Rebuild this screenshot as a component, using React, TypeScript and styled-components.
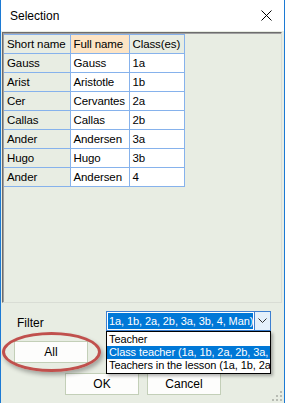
import styled, { createGlobalStyle } from 'styled-components';

const GlobalStyle = createGlobalStyle`
  html, body {
    margin: 0;
    padding: 0;
    background: #ffffff;
  }
  * {
    box-sizing: border-box;
  }
`;

const Window = styled.div`
  position: relative;
  width: 285px;
  height: 403px;
  display: flex;
  flex-direction: column;
  border-left: 1px solid #1c7ad4;
  border-right: 1px solid #1c7ad4;
  font-family: 'Liberation Sans', Arial, sans-serif;
  font-size: 12px;
  color: #000;
  overflow: hidden;
`;

const TitleBar = styled.div`
  height: 31px;
  flex-shrink: 0;
  display: flex;
  align-items: center;
  justify-content: space-between;
  padding: 0 10px 0 9px;
  background: #ffffff;
  font-size: 12px;
`;

const CloseButton = styled.button`
  width: 16px;
  height: 16px;
  padding: 0;
  border: none;
  background: transparent;
  display: flex;
  align-items: center;
  justify-content: center;
`;

const Body = styled.div`
  position: relative;
  flex: 1;
  display: flex;
  flex-direction: column;
  background: #e8ede3;
`;

const GridPanel = styled.div`
  margin: 1px 2px 0 1px;
  height: 271px;
  border-top: 1px solid #6d6d6d;
  border-left: 1px solid #6d6d6d;
  border-right: 1px solid #d9ddd5;
  border-bottom: 1px solid #d9ddd5;
  box-shadow: inset 1px 1px 0 #a0a0a0;
  padding: 1px 0 0 1px;
`;

const Table = styled.table`
  border-collapse: collapse;
  font-size: 11.5px;
  letter-spacing: -0.1px;
`;

const Cell = styled.td<{ $head?: boolean; $hot?: boolean; $w: number }>`
  width: ${(p) => p.$w}px;
  max-width: ${(p) => p.$w}px;
  height: 19px;
  padding: 0 0 0 3px;
  border: 1px solid #86b2ec;
  white-space: nowrap;
  overflow: hidden;
  background: ${(p) => (p.$hot ? '#fde4c4' : p.$head ? '#e8ede3' : '#ffffff')};
  &:first-child {
    background: ${(p) => (p.$hot ? '#fde4c4' : '#e8ede3')};
    border-left: none;
  }
`;

const FilterRow = styled.div`
  display: flex;
  align-items: center;
  padding: 8px 0 0 16px;
  height: 28px;
`;

const FilterLabel = styled.span`
  width: 89px;
  padding-top: 4px;
`;

const Combo = styled.div`
  width: 165px;
  height: 20px;
  display: flex;
  border: 1px solid #3d7fd0;
  background: #ffffff;
`;

const ComboValue = styled.div`
  flex: 1;
  margin: 1px;
  padding-left: 1px;
  background: #0078d7;
  color: #ffffff;
  font-size: 11px;
  line-height: 16px;
  letter-spacing: -0.1px;
  white-space: nowrap;
  overflow: hidden;
`;

const ComboArrow = styled.div`
  width: 16px;
  display: flex;
  align-items: center;
  justify-content: center;
  border-left: 1px solid #3d7fd0;
  background: #e5f1fb;
`;

const DropList = styled.ul`
  position: absolute;
  left: 105px;
  top: 300px;
  width: 165px;
  margin: 0;
  padding: 1px 0;
  list-style: none;
  border: 1px solid #000000;
  background: #ffffff;
  box-shadow: 2px 2px 3px rgba(0, 0, 0, 0.3);
  z-index: 3;
`;

const DropItem = styled.li<{ $active?: boolean }>`
  height: 13px;
  line-height: 13px;
  padding-left: 2px;
  font-size: 11px;
  letter-spacing: -0.1px;
  white-space: nowrap;
  overflow: hidden;
  background: ${(p) => (p.$active ? '#0078d7' : 'transparent')};
  color: ${(p) => (p.$active ? '#ffffff' : '#000000')};
`;

const AllRow = styled.div`
  padding: 10px 0 0 13px;
`;

const Button = styled.button<{ $w: number }>`
  width: ${(p) => p.$w}px;
  height: 22px;
  padding: 0;
  border: 1px solid #c3cfb8;
  background: #fdfdfc;
  font-family: 'Liberation Sans', Arial, sans-serif;
  font-size: 12px;
  color: #000;
`;

const ButtonRow = styled.div`
  display: flex;
  gap: 8px;
  padding: 10px 0 0 64px;
`;

const Highlight = styled.div`
  position: absolute;
  left: 1px;
  top: 301px;
  width: 99px;
  height: 40px;
  border: 3px solid #c0504d;
  border-radius: 50%;
  box-shadow: 2px 3px 4px rgba(0, 0, 0, 0.3);
  pointer-events: none;
  z-index: 2;
`;

const Grip = styled.svg`
  position: absolute;
  right: 2px;
  bottom: 2px;
`;

const rows = [
  ['Gauss', 'Gauss', '1a'],
  ['Arist', 'Aristotle', '1b'],
  ['Cer', 'Cervantes', '2a'],
  ['Callas', 'Callas', '2b'],
  ['Ander', 'Andersen', '3a'],
  ['Hugo', 'Hugo', '3b'],
  ['Ander', 'Andersen', '4'],
];

const widths = [66, 59, 55];

export default function App() {
  return (
    <>
      <GlobalStyle />
      <Window>
        <TitleBar>
          <span>Selection</span>
          <CloseButton aria-label="Close">
            <svg width="11" height="11" viewBox="0 0 11 11">
              <path d="M0.5 0.5 L10.5 10.5 M10.5 0.5 L0.5 10.5" stroke="#000" strokeWidth="1" />
            </svg>
          </CloseButton>
        </TitleBar>
        <Body>
          <GridPanel>
            <Table>
              <tbody>
                <tr>
                  <Cell $head $w={widths[0]}>Short name</Cell>
                  <Cell $head $hot $w={widths[1]}>Full name</Cell>
                  <Cell $head $w={widths[2]}>Class(es)</Cell>
                </tr>
                {rows.map((r, i) => (
                  <tr key={i}>
                    {r.map((c, j) => (
                      <Cell key={j} $w={widths[j]}>
                        {c}
                      </Cell>
                    ))}
                  </tr>
                ))}
              </tbody>
            </Table>
          </GridPanel>
          <FilterRow>
            <FilterLabel>Filter</FilterLabel>
            <Combo>
              <ComboValue>1a, 1b, 2a, 2b, 3a, 3b, 4, Man)</ComboValue>
              <ComboArrow>
                <svg width="9" height="6" viewBox="0 0 9 6">
                  <path d="M0.5 0.5 L4.5 4.5 L8.5 0.5" stroke="#333" fill="none" strokeWidth="1" />
                </svg>
              </ComboArrow>
            </Combo>
          </FilterRow>
          <DropList>
            <DropItem>Teacher</DropItem>
            <DropItem $active>Class teacher (1a, 1b, 2a, 2b, 3a, 3</DropItem>
            <DropItem>Teachers in the lesson (1a, 1b, 2a</DropItem>
          </DropList>
          <AllRow>
            <Button $w={74}>All</Button>
          </AllRow>
          <Highlight />
          <ButtonRow>
            <Button $w={74}>OK</Button>
            <Button $w={74}>Cancel</Button>
          </ButtonRow>
          <Grip width="10" height="10" viewBox="0 0 10 10">
            {[
              [8, 0], [8, 4], [4, 4], [8, 8], [4, 8], [0, 8],
            ].map(([x, y], i) => (
              <rect key={i} x={x} y={y} width="2" height="2" fill="#b8bcb4" />
            ))}
          </Grip>
        </Body>
      </Window>
    </>
  );
}
